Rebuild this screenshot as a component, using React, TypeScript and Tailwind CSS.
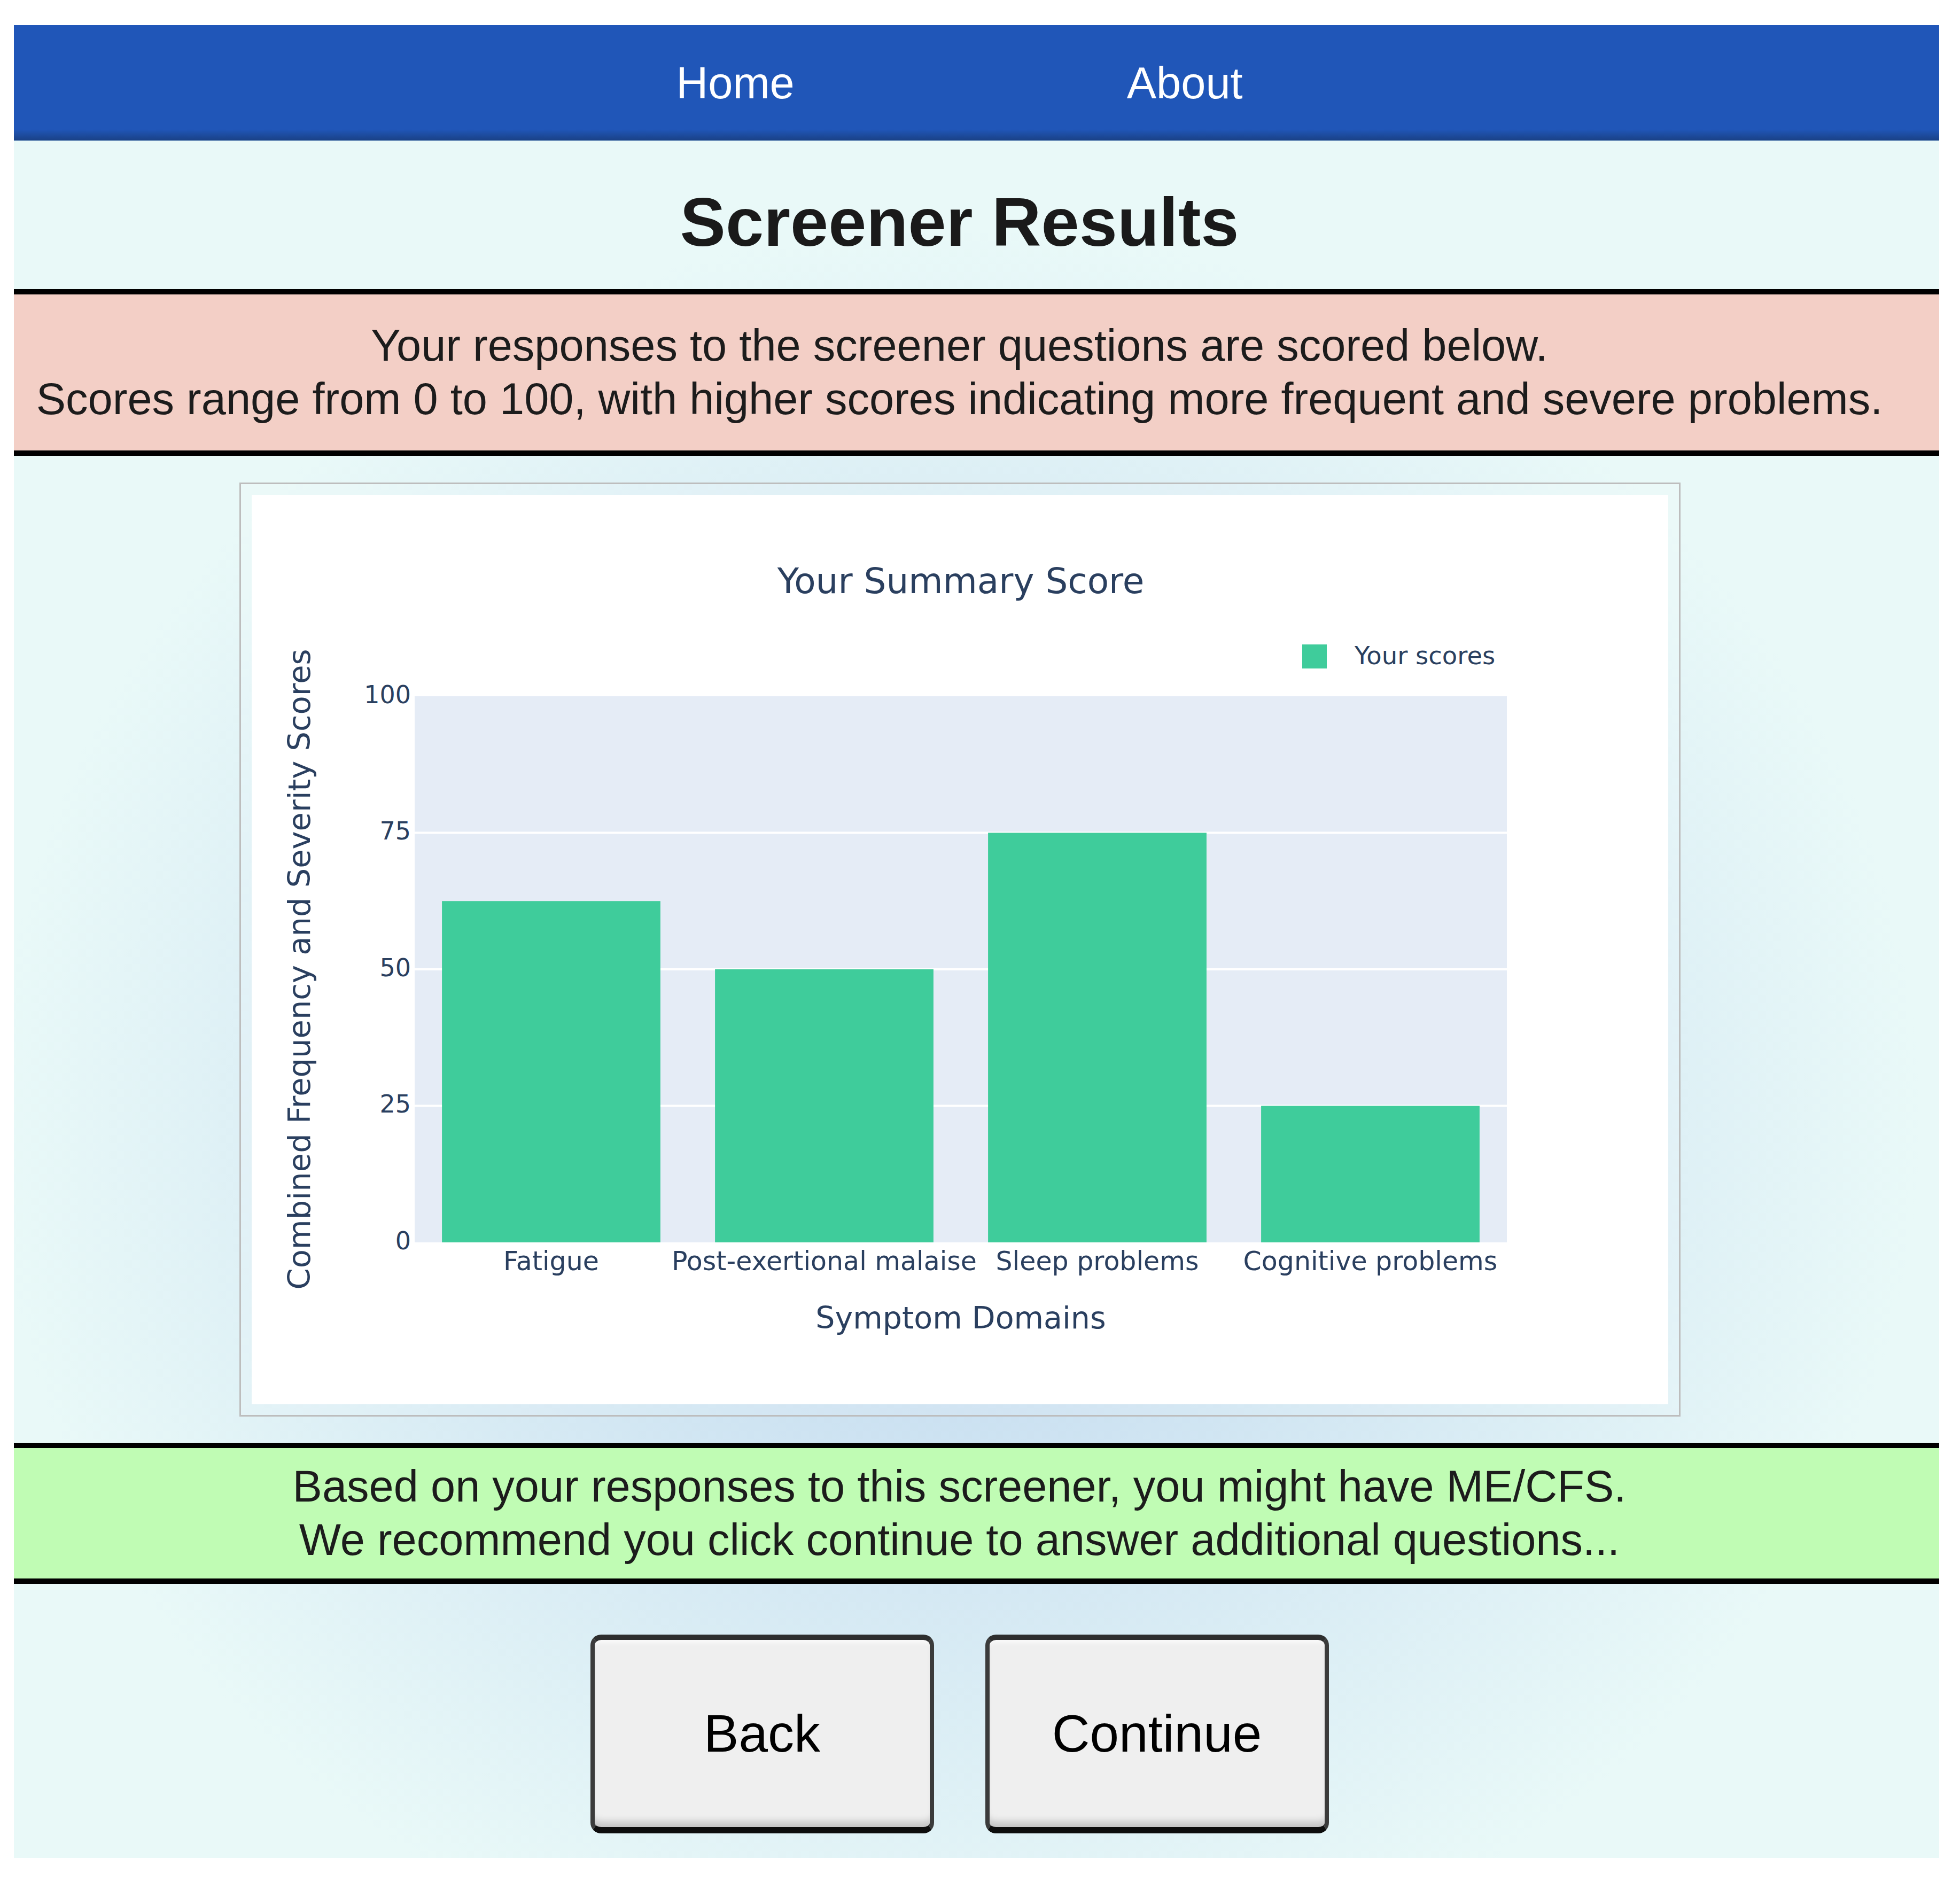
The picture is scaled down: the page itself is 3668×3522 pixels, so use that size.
import React from 'react';

const scores = [
  { label: 'Fatigue', value: 62.5 },
  { label: 'Post-exertional malaise', value: 50 },
  { label: 'Sleep problems', value: 75 },
  { label: 'Cognitive problems', value: 25 },
];

// plot area inside the white chart panel
const PX = 305;
const PY = 377;
const PW = 2044;
const PH = 1022;
const yOf = (v: number) => PY + PH * (1 - v / 100);

function SummaryChart() {
  const slot = PW / scores.length;
  const barW = slot * 0.8;
  const ink = '#2a3f5f';

  return (
    <svg width={2651} height={1702} viewBox="0 0 2651 1702" className="block bg-white">
      <g fontFamily='"DejaVu Sans", Verdana, sans-serif' fill={ink}>
        <text x={PX + PW / 2} y={166} fontSize={66} textAnchor="middle" dominantBaseline="middle">
          Your Summary Score
        </text>

        <rect x={PX} y={PY} width={PW} height={PH} fill="#e5ecf6" />
        {[25, 50, 75].map((v) => (
          <line key={v} x1={PX} x2={PX + PW} y1={yOf(v)} y2={yOf(v)} stroke="#ffffff" strokeWidth={4} />
        ))}

        {scores.map((s, i) => {
          const cx = PX + slot * (i + 0.5);
          return (
            <g key={s.label}>
              <rect x={cx - barW / 2} y={yOf(s.value)} width={barW} height={PY + PH - yOf(s.value)} fill="#3fcc9b" />
              <text x={cx} y={1437} fontSize={49} textAnchor="middle" dominantBaseline="middle">
                {s.label}
              </text>
            </g>
          );
        })}

        {[0, 25, 50, 75, 100].map((v) => (
          <text key={v} x={298} y={yOf(v)} fontSize={46} textAnchor="end" dominantBaseline="middle">
            {v}
          </text>
        ))}

        <rect x={1966} y={280} width={46} height={45} fill="#3fcc9b" />
        <text x={2064} y={304} fontSize={46.5} dominantBaseline="middle">
          Your scores
        </text>

        <text x={PX + PW / 2} y={1544} fontSize={57} textAnchor="middle" dominantBaseline="middle">
          Symptom Domains
        </text>
        <text
          x={93}
          y={PY + PH / 2}
          fontSize={57.5}
          textAnchor="middle"
          dominantBaseline="middle"
          transform={`rotate(-90 93 ${PY + PH / 2})`}
        >
          Combined Frequency and Severity Scores
        </text>
      </g>
    </svg>
  );
}

function BevelButton({ children }: { children: React.ReactNode }) {
  return (
    <button
      type="button"
      className="w-[643px] h-[372px] box-border rounded-[20px] border-[8px] border-[#3b3b3b] border-t-[10px] border-t-[#2e2e2e] border-b-[12px] border-b-[#0d0d0d] bg-[#efefef] shadow-[inset_0_-18px_14px_-8px_rgba(0,0,0,0.18),inset_0_10px_10px_-6px_rgba(255,255,255,0.8)] text-[98px] text-black"
    >
      {children}
    </button>
  );
}

export default function App() {
  return (
    <div
      className="bg-white min-h-screen pt-[47px] pl-[26px] pb-[44px]"
      style={{ fontFamily: '"Liberation Sans", Arial, Helvetica, sans-serif' }}
    >
      <div className="w-[3603px]">
        <nav className="h-[217px] bg-[linear-gradient(to_bottom,#2056b8_0%,#2056b8_90%,#1a4288_99%,#b9d8e6_100%)] flex items-center justify-center gap-[622px] pr-[64px] text-white text-[83px]">
          <a href="#" className="leading-none">Home</a>
          <a href="#" className="leading-none">About</a>
        </nav>

        <main className="bg-[radial-gradient(ellipse_50%_52%_at_49%_57%,#bcd5ee_0%,#cfe4f2_40%,#e9f9f8_100%)] pb-[46px]">
          <header className="pt-[77px] pb-[50px] pr-[64px] text-center">
            <h1 className="text-[128px] leading-[150px] font-bold text-[#1a1a1a]">Screener Results</h1>
          </header>

          <section className="box-border h-[312px] border-y-[10px] border-black bg-[#f3cfc6] flex flex-col justify-center pr-[64px] text-center text-[83px] leading-[100px] text-[#1c1c1c]">
            <p>Your responses to the screener questions are scored below.</p>
            <p>Scores range from 0 to 100, with higher scores indicating more frequent and severe problems.</p>
          </section>

          <div className="pt-[50px] pb-[49px] pr-[62px] flex justify-center">
            <div className="border-[3px] border-[#bdbdbd] p-[20px] bg-[rgba(255,255,255,0.12)]">
              <SummaryChart />
            </div>
          </div>

          <section className="box-border h-[264px] border-y-[10px] border-black bg-[#c0fcb4] flex flex-col justify-center pr-[64px] text-center text-[83px] leading-[100px] text-[#1c1c1c]">
            <p>Based on your responses to this screener, you might have ME/CFS.</p>
            <p>We recommend you click continue to answer additional questions...</p>
          </section>

          <div className="pt-[95px] pr-[64px] flex justify-center gap-[96px]">
            <BevelButton>Back</BevelButton>
            <BevelButton>Continue</BevelButton>
          </div>
        </main>
      </div>
    </div>
  );
}
